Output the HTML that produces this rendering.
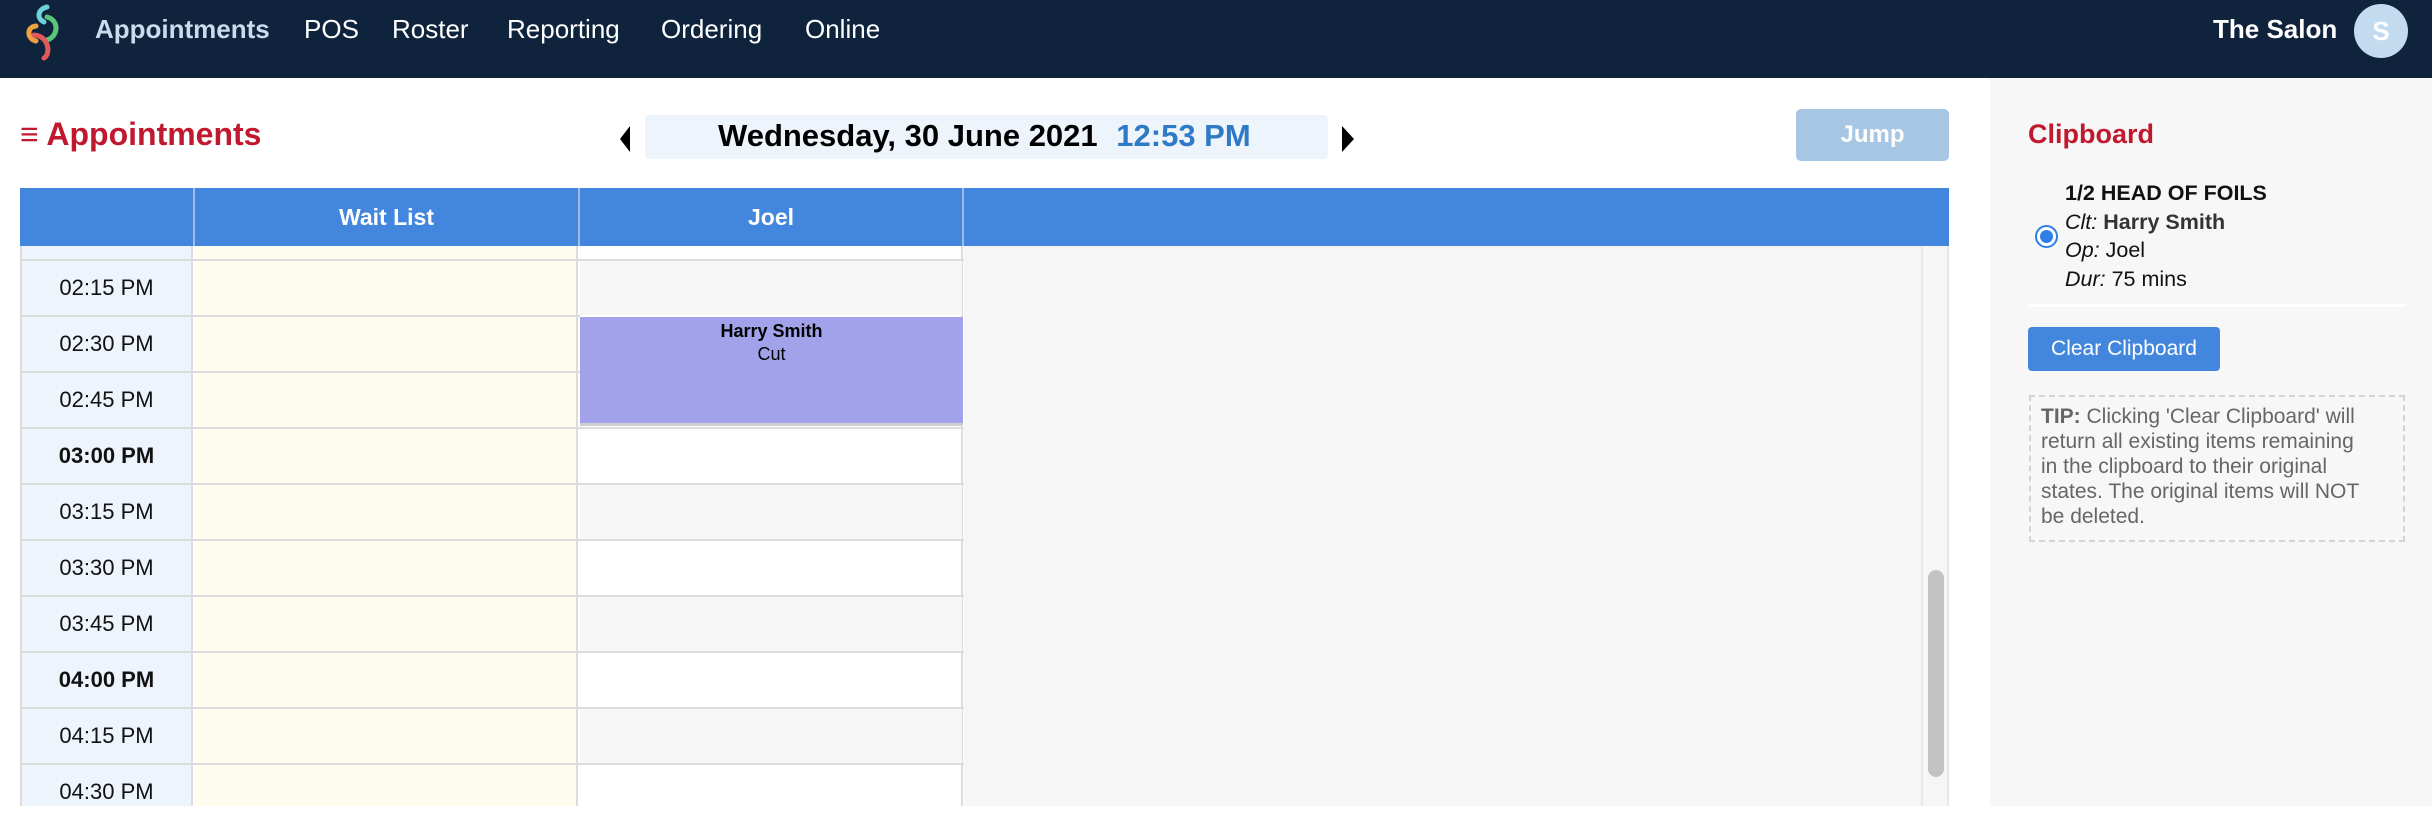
<!DOCTYPE html>
<html><head><meta charset="utf-8"><style>
*{margin:0;padding:0;box-sizing:border-box}
body{width:2432px;height:806px;overflow:hidden;background:#fff;font-family:"Liberation Sans",sans-serif;position:relative}
.a{position:absolute}
.nav{left:0;top:0;width:2432px;height:78px;background:#10233d}
.ni{top:14px;font-size:26px;color:#fff}
.t{font-size:22px;color:#111;text-align:center;line-height:54px}
</style></head><body>
<div class="a nav"></div>
<svg class="a" style="left:14px;top:2px" width="56" height="60" viewBox="0 0 56 60">
<path d="M33 5 C24 7 22 16 30 20" stroke="#6fd0d8" stroke-width="5" fill="none" stroke-linecap="round"/>
<path d="M33 15 C45 18 45 34 33 38" stroke="#5cc57a" stroke-width="5" fill="none" stroke-linecap="round"/>
<path d="M22 24 C12 25 13 37 22 39" stroke="#f0a040" stroke-width="5" fill="none" stroke-linecap="round"/>
<path d="M20 33 C35 34 37 52 30 56" stroke="#e05a5a" stroke-width="5" fill="none" stroke-linecap="round"/>
</svg>
<div class="a ni" style="left:95px;color:#c9dced;font-weight:bold">Appointments</div>
<div class="a ni" style="left:304px">POS</div>
<div class="a ni" style="left:392px">Roster</div>
<div class="a ni" style="left:507px">Reporting</div>
<div class="a ni" style="left:661px">Ordering</div>
<div class="a ni" style="left:805px">Online</div>
<div class="a ni" style="left:2213px;font-weight:bold">The Salon</div>
<div class="a" style="left:2354px;top:4px;width:54px;height:54px;border-radius:50%;background:#c2dbef;color:#fff;font-size:26px;font-weight:bold;text-align:center;line-height:54px">S</div>

<div class="a" style="left:20px;top:116px;font-size:32px;font-weight:bold;color:#c0182e">≡ Appointments</div>
<svg class="a" style="left:618px;top:126px" width="14" height="26"><path d="M12 0 L2 13 L12 26Z" fill="#000"/></svg>
<div class="a" style="left:645px;top:115px;width:683px;height:44px;background:#eef4fb;border-radius:4px"></div>
<div class="a" style="left:718px;top:118px;font-size:31px;font-weight:bold;color:#000;white-space:nowrap">Wednesday, 30 June 2021 <span style="color:#2f7ac4;margin-left:10px">12:53 PM</span></div>
<svg class="a" style="left:1340px;top:126px" width="16" height="26"><path d="M2 0 L14 13 L2 26Z" fill="#000"/></svg>
<div class="a" style="left:1796px;top:109px;width:153px;height:52px;background:#a6c6e3;border-radius:5px;color:#fff;font-size:24px;font-weight:bold;text-align:center;line-height:52px">Jump</div>

<div class="a" style="left:20px;top:188px;width:1929px;height:58px;background:#4286dd"></div>
<div class="a" style="left:193px;top:188px;width:2px;height:58px;background:#9dbde9"></div>
<div class="a" style="left:578px;top:188px;width:2px;height:58px;background:#9dbde9"></div>
<div class="a" style="left:962px;top:188px;width:2px;height:58px;background:#9dbde9"></div>
<div class="a" style="left:195px;top:188px;width:383px;line-height:58px;text-align:center;color:#fff;font-size:23px;font-weight:bold">Wait List</div>
<div class="a" style="left:580px;top:188px;width:382px;line-height:58px;text-align:center;color:#fff;font-size:23px;font-weight:bold">Joel</div>

<div class="a" style="left:20px;top:246px;width:173px;height:560px;background:#eef4fb;border-left:2px solid #dcdcdc;border-right:2px solid #dcdcdc"></div>
<div class="a" style="left:195px;top:246px;width:383px;height:560px;background:#fefcec;border-right:2px solid #dcdcdc"></div>
<div class="a" style="left:580px;top:246px;width:383px;height:560px;background:#fff;border-right:2px solid #dcdcdc"></div>
<div class="a" style="left:964px;top:246px;width:985px;height:560px;background:#f6f6f6;border-right:2px solid #e6e6e6"></div>
<div class="a" style="left:1921px;top:246px;width:2px;height:560px;background:#e8e8e8"></div>
<div class="a" style="left:1928px;top:570px;width:16px;height:207px;background:#c2c2c2;border-radius:8px"></div>

<div class="a" style="left:20px;top:259px;width:944px;height:2px;background:#dcdcdc"></div>
<div class="a" style="left:580px;top:261px;width:382px;height:54px;background:#f6f6f6"></div>
<div class="a" style="left:580px;top:317px;width:383px;height:109px;background:#a2a2ea;border-bottom:3px solid #cfcfcf"></div>
<div class="a" style="left:580px;top:321px;width:383px;text-align:center;font-size:18px;font-weight:bold;color:#000">Harry Smith</div>
<div class="a" style="left:580px;top:344px;width:383px;text-align:center;font-size:18px;color:#000">Cut</div>
<div class="a" style="left:580px;top:485px;width:382px;height:54px;background:#f6f6f6"></div>
<div class="a" style="left:580px;top:597px;width:382px;height:54px;background:#f6f6f6"></div>
<div class="a" style="left:580px;top:709px;width:382px;height:54px;background:#f6f6f6"></div>

<div class="a" style="left:20px;top:315px;width:560px;height:2px;background:#dcdcdc"></div>
<div class="a" style="left:20px;top:371px;width:560px;height:2px;background:#dcdcdc"></div>
<div class="a" style="left:20px;top:427px;width:944px;height:2px;background:#dcdcdc"></div>
<div class="a" style="left:20px;top:483px;width:944px;height:2px;background:#dcdcdc"></div>
<div class="a" style="left:20px;top:539px;width:944px;height:2px;background:#dcdcdc"></div>
<div class="a" style="left:20px;top:595px;width:944px;height:2px;background:#dcdcdc"></div>
<div class="a" style="left:20px;top:651px;width:944px;height:2px;background:#dcdcdc"></div>
<div class="a" style="left:20px;top:707px;width:944px;height:2px;background:#dcdcdc"></div>
<div class="a" style="left:20px;top:763px;width:944px;height:2px;background:#dcdcdc"></div>

<div class="a t" style="left:20px;top:261px;width:173px">02:15 PM</div>
<div class="a t" style="left:20px;top:317px;width:173px">02:30 PM</div>
<div class="a t" style="left:20px;top:373px;width:173px">02:45 PM</div>
<div class="a t" style="left:20px;top:429px;width:173px;font-weight:bold">03:00 PM</div>
<div class="a t" style="left:20px;top:485px;width:173px">03:15 PM</div>
<div class="a t" style="left:20px;top:541px;width:173px">03:30 PM</div>
<div class="a t" style="left:20px;top:597px;width:173px">03:45 PM</div>
<div class="a t" style="left:20px;top:653px;width:173px;font-weight:bold">04:00 PM</div>
<div class="a t" style="left:20px;top:709px;width:173px">04:15 PM</div>
<div class="a t" style="left:20px;top:765px;width:173px">04:30 PM</div>

<div class="a" style="left:1990px;top:78px;width:442px;height:728px;background:#f7f7f7"></div>
<div class="a" style="left:2028px;top:119px;font-size:27px;font-weight:bold;color:#c0182e">Clipboard</div>
<div class="a" style="left:2035px;top:225px;width:23px;height:23px;border-radius:50%;border:2px solid #2f7fe8;background:#fff"></div>
<div class="a" style="left:2040px;top:230px;width:13px;height:13px;border-radius:50%;background:#2f7fe8"></div>
<div class="a" style="left:2065px;top:179px;font-size:21.5px;line-height:28.5px;color:#111">
<b>1/2 HEAD OF FOILS</b><br><i>Clt:</i> <b style="color:#333">Harry Smith</b><br><i>Op:</i> Joel<br><i>Dur:</i> 75 mins</div>
<div class="a" style="left:2028px;top:304px;width:377px;height:3px;background:#fff"></div>
<div class="a" style="left:2028px;top:327px;width:192px;height:44px;background:#4286dd;border-radius:4px;color:#fff;font-size:21px;line-height:44px;text-align:center">Clear Clipboard</div>
<div class="a" style="left:2029px;top:395px;width:376px;height:147px;border:2px dashed #d4d4d4"></div>
<div class="a" style="left:2041px;top:404px;font-size:21px;line-height:25px;color:#666;white-space:nowrap"><b>TIP:</b> Clicking 'Clear Clipboard' will<br>return all existing items remaining<br>in the clipboard to their original<br>states. The original items will NOT<br>be deleted.</div>
</body></html>
